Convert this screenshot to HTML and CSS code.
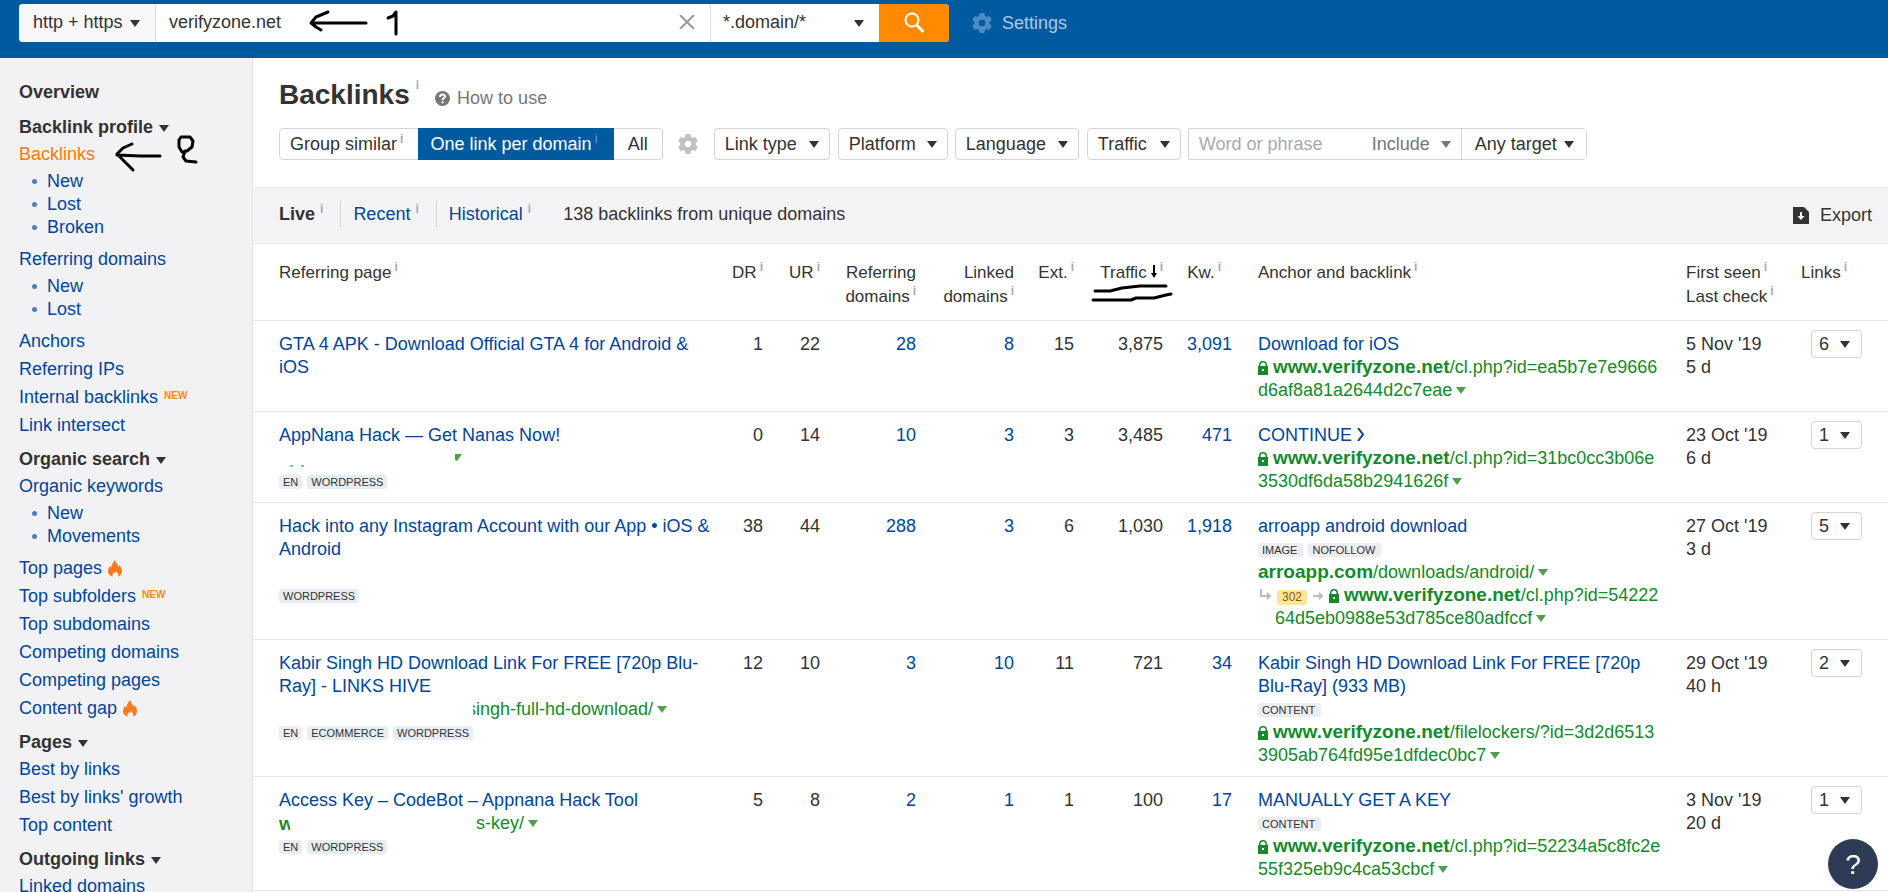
FILE: index.html
```html
<!DOCTYPE html>
<html lang="en">
<head>
<meta charset="utf-8">
<title>Backlinks: verifyzone.net</title>
<link rel="stylesheet" href="styles.css">
</head>
<body>
<svg class="defs" aria-hidden="true">
  <symbol id="gear" viewBox="0 0 24 24"><path fill="currentColor" fill-rule="evenodd" d="M9.2 0h5.6l.7 3.4 2.2 1.3L21 3.600l2.8 4.800-2.600 2.300v2.600l2.600 2.300-2.800 4.800-3.300-1.100-2.200 1.300-.7 3.400H9.200l-.7-3.400-2.200-1.300L3 20.400.2 15.600l2.600-2.300v-2.600L.2 8.400 3 3.600l3.300 1.100 2.200-1.300zM12 8a4 4 0 1 0 0 8 4 4 0 0 0 0-8z"/></symbol>
  <symbol id="lock" viewBox="0 0 10 14"><path fill="currentColor" fill-rule="evenodd" d="M0 5h1V4a4 4 0 0 1 8 0v1h1v9H0zM2.500 5h5V4a2.500 2.500 0 0 0-5 0zM4 8v2h2V8z"/></symbol>
  <symbol id="caret" viewBox="0 0 10 7"><path fill="currentColor" d="M0 0h10L5 7z"/></symbol>
  <symbol id="fire" viewBox="0 0 14 17"><path fill="#ff7a1f" d="M7 0c.6 2.600 3 4.200 3.400 7 .5-.5.8-1.300.8-2C13 6.700 14 9 14 11.300c0 2.500-1.300 4.400-3.600 5.500.3-2.300-.6-4-2.400-5.500-.2 1-.6 1.600-1.300 2-.3-.5-.5-1-.5-1.600-1.300 1.400-2 3-1.600 5.100C1.600 15.900 0 13.800 0 11.300 0 9 1.100 7.200 2.500 5.500c0 1 .2 1.800.8 2.500C3.500 5 5 2.200 7 0z"/></symbol>
</svg>

<header class="topbar">
  <form class="search">
    <select class="select search-protocol" aria-label="Protocol"><option>http + https</option></select>
    <div class="search-field">
      <input class="search-input" type="text" value="verifyzone.net" aria-label="Domain or URL">
      <button class="clear" type="button" aria-label="Clear"><svg width="16" height="14" viewBox="0 0 16 14"><path d="M1 0l14 14M15 0L1 14" stroke="#999" stroke-width="2"/></svg></button>
    </div>
    <select class="select search-mode" aria-label="Mode"><option>*.domain/*</option></select>
    <button class="search-go" type="button" aria-label="Search"><svg width="22" height="22" viewBox="0 0 22 22" fill="none" stroke="#fff" stroke-width="2"><circle cx="9" cy="8" r="6.500"/><path d="M13.500 13l7 7" stroke-width="3"/></svg></button>
  </form>
  <a class="settings" href="#"><svg width="20" height="20"><use href="#gear"/></svg>Settings</a>
</header>

<div class="layout">
  <nav class="sidebar">
    <h2 class="side-title">Overview</h2>
    <h2 class="side-title side-title-first">Backlink profile <svg class="side-caret"><use href="#caret"/></svg></h2>
    <ul class="side-list">
      <li><a class="active" href="#">Backlinks</a>
        <ul class="side-sub"><li><a href="#">New</a></li><li><a href="#">Lost</a></li><li><a href="#">Broken</a></li></ul></li>
      <li><a href="#">Referring domains</a>
        <ul class="side-sub"><li><a href="#">New</a></li><li><a href="#">Lost</a></li></ul></li>
      <li><a href="#">Anchors</a></li>
      <li><a href="#">Referring IPs</a></li>
      <li><a href="#">Internal backlinks</a><span class="new">NEW</span></li>
      <li><a href="#">Link intersect</a></li>
    </ul>
    <h2 class="side-title">Organic search <svg class="side-caret"><use href="#caret"/></svg></h2>
    <ul class="side-list">
      <li><a href="#">Organic keywords</a>
        <ul class="side-sub"><li><a href="#">New</a></li><li><a href="#">Movements</a></li></ul></li>
      <li><a href="#">Top pages</a><svg class="fire"><use href="#fire"/></svg></li>
      <li><a href="#">Top subfolders</a><span class="new">NEW</span></li>
      <li><a href="#">Top subdomains</a></li>
      <li><a href="#">Competing domains</a></li>
      <li><a href="#">Competing pages</a></li>
      <li><a href="#">Content gap</a><svg class="fire"><use href="#fire"/></svg></li>
    </ul>
    <h2 class="side-title">Pages <svg class="side-caret"><use href="#caret"/></svg></h2>
    <ul class="side-list">
      <li><a href="#">Best by links</a></li>
      <li><a href="#">Best by links' growth</a></li>
      <li><a href="#">Top content</a></li>
    </ul>
    <h2 class="side-title">Outgoing links <svg class="side-caret"><use href="#caret"/></svg></h2>
    <ul class="side-list">
      <li><a href="#">Linked domains</a></li>
    </ul>
  </nav>

  <main class="main">
    <div class="heading">
      <h1>Backlinks</h1><sup class="info">i</sup>
      <a class="howto" href="#"><svg width="15" height="15" viewBox="0 0 15 15"><circle cx="7.500" cy="7.500" r="7.500" fill="#777"/><path d="M5 6c0-3.200 5-3.200 5-.5 0 1.700-2.400 1.600-2.400 3.500M7.600 10.300v2" fill="none" stroke="#fff" stroke-width="2"/></svg>How to use</a>
    </div>

    <div class="filters">
      <div class="group">
        <button type="button">Group similar<sup class="info">i</sup></button>
        <button type="button" class="on">One link per domain<sup class="info">i</sup></button>
        <button type="button">All</button>
      </div>
      <button class="gear" type="button" aria-label="Filter settings"><svg width="20" height="20"><use href="#gear"/></svg></button>
      <select class="select filter f-type" aria-label="Link type"><option>Link type</option></select>
      <select class="select filter f-platform" aria-label="Platform"><option>Platform</option></select>
      <select class="select filter f-language" aria-label="Language"><option>Language</option></select>
      <select class="select filter f-traffic" aria-label="Traffic"><option>Traffic</option></select>
      <div class="phrase">
        <input type="text" placeholder="Word or phrase" aria-label="Word or phrase">
        <select class="select phrase-mode" aria-label="Include or exclude"><option>Include</option></select>
        <select class="select phrase-target" aria-label="Target"><option>Any target</option></select>
      </div>
    </div>

    <div class="tabs">
      <span class="tab"><b>Live</b><sup class="info">i</sup></span>
      <span class="tab"><a href="#">Recent</a><sup class="info">i</sup></span>
      <span class="tab"><a href="#">Historical</a><sup class="info">i</sup></span>
      <span class="count">138 backlinks from unique domains</span>
      <button class="export" type="button"><svg width="16" height="17" viewBox="0 0 16 17"><path d="M0 0h11l5 5v12H0z" fill="#333"/><path d="M7 5h2v4h2.500L8 13 4.500 9H7z" fill="#fff"/></svg>Export</button>
    </div>

    <table class="links">
      <colgroup><col class="c-page"><col class="c-dr"><col class="c-ur"><col class="c-rd"><col class="c-ld"><col class="c-ext"><col class="c-traffic"><col class="c-kw"><col><col class="c-seen"><col class="c-links"></colgroup>
      <thead>
        <tr>
          <th class="page">Referring page<sup class="info">i</sup></th>
          <th class="num">DR<sup class="info">i</sup></th>
          <th class="num">UR<sup class="info">i</sup></th>
          <th class="num">Referring<br>domains<sup class="info">i</sup></th>
          <th class="num">Linked<br>domains<sup class="info">i</sup></th>
          <th class="num">Ext.<sup class="info">i</sup></th>
          <th class="num marked">Traffic<svg class="sort" viewBox="0 0 6 13"><path d="M2 0h2v8h2l-3 5-3-5h2z"/></svg><sup class="info">i</sup>
            <svg class="pen underline" viewBox="0 0 82 18"><path d="M4 7l15 0 12-3 18-2 26 0M2 16l38 0 5-2 18 0 12-3 5-1"/></svg></th>
          <th class="num kw">Kw.<sup class="info">i</sup></th>
          <th class="anchor">Anchor and backlink<sup class="info">i</sup></th>
          <th>First seen<sup class="info">i</sup><br>Last check<sup class="info">i</sup></th>
          <th>Links<sup class="info">i</sup></th>
        </tr>
      </thead>
      <tbody>
        <tr>
          <td class="page"><a href="#">GTA 4 APK - Download Official GTA 4 for Android &amp; iOS</a></td>
          <td class="num">1</td><td class="num">22</td><td class="num"><a href="#">28</a></td><td class="num"><a href="#">8</a></td><td class="num">15</td><td class="num">3,875</td><td class="num"><a href="#">3,091</a></td>
          <td class="anchor"><a href="#">Download for iOS</a>
            <div class="url"><svg class="lock"><use href="#lock"/></svg><b>www.verifyzone.net</b>/cl.php?id=ea5b7e7e9666<wbr>d6af8a81a2644d2c7eae<svg class="more"><use href="#caret"/></svg></div></td>
          <td>5 Nov '19<br>5 d</td>
          <td class="pick"><select class="select" aria-label="Links"><option>6</option></select></td>
        </tr>
        <tr>
          <td class="page"><a href="#">AppNana Hack — Get Nanas Now!</a>
            <div class="url"><svg class="erased" viewBox="0 0 190 23"><path d="M176 7h7l-5 7-2-1z" fill="#4f9f4f"/><path d="M11 19h3M22 19h3" stroke="#148a2b"/></svg></div>
            <div class="tags"><span class="tag">EN</span><span class="tag cms">WORDPRESS</span></div></td>
          <td class="num">0</td><td class="num">14</td><td class="num"><a href="#">10</a></td><td class="num"><a href="#">3</a></td><td class="num">3</td><td class="num">3,485</td><td class="num"><a href="#">471</a></td>
          <td class="anchor"><a href="#">CONTINUE <svg class="chevron" viewBox="0 0 8 13"><path d="M1 0l5 6.500L1 13"/></svg></a>
            <div class="url"><svg class="lock"><use href="#lock"/></svg><b>www.verifyzone.net</b>/cl.php?id=31bc0cc3b06e<wbr>3530df6da58b2941626f<svg class="more"><use href="#caret"/></svg></div></td>
          <td>23 Oct '19<br>6 d</td>
          <td class="pick"><select class="select" aria-label="Links"><option>1</option></select></td>
        </tr>
        <tr>
          <td class="page"><a href="#">Hack into any Instagram Account with our App • iOS &amp; Android</a>
            <div class="url blank"></div>
            <div class="tags"><span class="tag cms">WORDPRESS</span></div></td>
          <td class="num">38</td><td class="num">44</td><td class="num"><a href="#">288</a></td><td class="num"><a href="#">3</a></td><td class="num">6</td><td class="num">1,030</td><td class="num"><a href="#">1,918</a></td>
          <td class="anchor"><a href="#">arroapp android download</a>
            <div class="tags"><span class="tag">IMAGE</span><span class="tag">NOFOLLOW</span></div>
            <div class="url"><b>arroapp.com</b>/downloads/android/<svg class="more"><use href="#caret"/></svg></div>
            <div class="url redirect"><svg class="hop" viewBox="0 0 12 12"><path d="M1 0v7h9M7 4l3 3-3 3"/></svg><span class="code">302</span><svg class="hop hop-next" viewBox="0 0 12 12"><path d="M0 7h9M6 4l3 3-3 3"/></svg><svg class="lock"><use href="#lock"/></svg><b>www.verifyzone.net</b>/cl.php?id=54222<wbr>64d5eb0988e53d785ce80adfccf<svg class="more"><use href="#caret"/></svg></div></td>
          <td>27 Oct '19<br>3 d</td>
          <td class="pick"><select class="select" aria-label="Links"><option>5</option></select></td>
        </tr>
        <tr>
          <td class="page"><a href="#">Kabir Singh HD Download Link For FREE [720p Blu-Ray] - LINKS HIVE</a>
            <div class="url partial"><span class="cut">singh-full-hd-download/</span><svg class="more"><use href="#caret"/></svg></div>
            <div class="tags"><span class="tag">EN</span><span class="tag cms">ECOMMERCE</span><span class="tag cms">WORDPRESS</span></div></td>
          <td class="num">12</td><td class="num">10</td><td class="num"><a href="#">3</a></td><td class="num"><a href="#">10</a></td><td class="num">11</td><td class="num">721</td><td class="num"><a href="#">34</a></td>
          <td class="anchor"><a href="#">Kabir Singh HD Download Link For FREE [720p Blu-Ray] (933 MB)</a>
            <div class="tags"><span class="tag">CONTENT</span></div>
            <div class="url"><svg class="lock"><use href="#lock"/></svg><b>www.verifyzone.net</b>/filelockers/?id=3d2d6513<wbr>3905ab764fd95e1dfdec0bc7<svg class="more"><use href="#caret"/></svg></div></td>
          <td>29 Oct '19<br>40 h</td>
          <td class="pick"><select class="select" aria-label="Links"><option>2</option></select></td>
        </tr>
        <tr>
          <td class="page"><a href="#">Access Key – CodeBot – Appnana Hack Tool</a>
            <div class="url split"><b class="stub">w</b><span>s-key/<svg class="more"><use href="#caret"/></svg></span></div>
            <div class="tags"><span class="tag">EN</span><span class="tag cms">WORDPRESS</span></div></td>
          <td class="num">5</td><td class="num">8</td><td class="num"><a href="#">2</a></td><td class="num"><a href="#">1</a></td><td class="num">1</td><td class="num">100</td><td class="num"><a href="#">17</a></td>
          <td class="anchor"><a href="#">MANUALLY GET A KEY</a>
            <div class="tags"><span class="tag">CONTENT</span></div>
            <div class="url"><svg class="lock"><use href="#lock"/></svg><b>www.verifyzone.net</b>/cl.php?id=52234a5c8fc2e<wbr>55f325eb9c4ca53cbcf<svg class="more"><use href="#caret"/></svg></div></td>
          <td>3 Nov '19<br>20 d</td>
          <td class="pick"><select class="select" aria-label="Links"><option>1</option></select></td>
        </tr>
      </tbody>
    </table>
  </main>
</div>

<svg class="pen step-one" viewBox="0 0 96 30" role="img" aria-label="1"><path d="M58 14H4M20 3L8 8l-5 6 5 4 5 3M80 9l5-2 3-4v22"/></svg>
<svg class="pen step-two" viewBox="0 0 90 40" role="img" aria-label="2"><path d="M49 22l-20 0-23-1M21 10L12 14l-6 6 8 8 8 8M68 12V6l2-3h9l3 4-1 6-5 4-5 1-3-5M74 17l-2 6 3 4 10 1"/></svg>
<button class="help" type="button" aria-label="Help">?</button>
</body>
</html>
```
FILE: styles.css
```css
* { box-sizing: border-box; }

body {
  margin: 0;
  height: 100vh;
  overflow: hidden;
  display: flex;
  flex-direction: column;
  position: relative;
  background: #fff;
  color: #333;
  font: 18px/23px "Liberation Sans", Arial, sans-serif;
}

a { color: #00459c; text-decoration: none; }
h1, h2, ul { margin: 0; padding: 0; }
ul { list-style: none; }
button, input, select { font: inherit; color: inherit; margin: 0; padding: 0; border: 0; background: none; }
button { cursor: pointer; }
.defs { position: absolute; width: 0; height: 0; }

.select {
  appearance: none;
  background: #fff url("data:image/svg+xml,%3Csvg xmlns='http://www.w3.org/2000/svg' width='10' height='7'%3E%3Cpath d='M0 0h10L5 7z' fill='%23333'/%3E%3C/svg%3E") no-repeat right 10px center;
}

.info {
  margin-left: 4px;
  color: #aaa;
  font-size: 12px;
  font-weight: bold;
  line-height: 1;
  vertical-align: 7px;
}

/* Top bar */
.topbar {
  flex: none;
  display: flex;
  align-items: flex-start;
  gap: 23px;
  height: 58px;
  padding: 4px 19px;
  background: #005a9f;
}
.search {
  flex: 0 1 930px;
  display: flex;
  height: 38px;
  border-radius: 4px;
  overflow: hidden;
  background: #fff;
}
.search-protocol {
  width: 137px;
  padding: 0 14px 1px;
  border-right: 1px solid #ddd;
  background-color: #f7f7fa;
  background-position: right 15px top 16px;
}
.search-field { flex: 1; display: flex; align-items: center; min-width: 0; padding: 0 15px 0 13px; }
.search-input { flex: 1; min-width: 0; height: 38px; padding-bottom: 1px; outline: 0; }
.clear { display: flex; padding-bottom: 2px; }
.search-mode {
  width: 169px;
  padding: 0 12px 1px;
  border-left: 1px solid #ddd;
  background-position: right 15px top 16px;
}
.search-go { width: 70px; display: grid; place-items: center; background: #ff8a00; }
.settings { display: flex; align-items: center; gap: 10px; height: 38px; color: #a9cae5; }
.settings svg { color: #4a8cc4; }

.layout { flex: 1; display: flex; min-height: 0; }

/* Sidebar */
.sidebar {
  flex: none;
  width: 253px;
  padding: 21px 19px 0;
  border-right: 1px solid #e2e2e6;
  background: #f2f2f4;
  overflow: hidden;
}
.side-title { margin-top: 7px; font-size: 18px; line-height: 26px; }
.side-title:first-child { margin-top: 0; }
.side-title-first { margin-top: 9px; }
.side-caret { width: 10px; height: 7px; margin-left: 1px; vertical-align: 1px; }
.side-list > li { line-height: 28px; }
.side-sub { padding: 2px 0 6px 28px; }
.side-sub li { display: flex; align-items: center; line-height: 23px; }
.side-sub li::before { content: ""; width: 5px; height: 5px; margin: 0 10px 0 -15px; border-radius: 50%; background: #4a7fc0; }
.active { color: #ff7a00; }
.new { margin-left: 6px; color: #ff8a00; font-size: 10px; font-weight: bold; line-height: 1; vertical-align: 4px; }
.fire { width: 14px; height: 17px; margin-left: 6px; vertical-align: -3px; }

/* Heading and filters */
.main { flex: 1; min-width: 0; padding-top: 21px; }
.heading { display: flex; padding: 0 26px; margin-bottom: 17px; }
.heading h1 { font-size: 28px; line-height: 32px; }
.heading .info { margin-left: 6px; }
.howto { display: flex; align-items: center; gap: 7px; margin-left: 16px; padding-top: 6px; color: #777; }

.filters { display: flex; align-items: center; height: 32px; margin: 0 26px 27px; }
.group { display: flex; height: 32px; margin-right: 15px; border: 1px solid #d4d4d4; border-radius: 4px; }
.group button { padding: 0 15px 0 10px; white-space: nowrap; }
.group button:last-child { padding: 0 14px; }
.group .info { margin-left: 3px; }
.group .on { margin: -1px 0; padding: 0 16px 0 12px; background: #005a9f; color: #fff; }
.group .on .info { color: #4a8cc4; }
.gear { display: flex; margin-right: 16px; color: #c0c0c0; }
.filter { height: 32px; margin-right: 8px; padding: 0 10px; border: 1px solid #d4d4d4; border-radius: 4px; }
.f-type { width: 116px; }
.f-platform { width: 110px; margin-right: 7px; }
.f-language { width: 124px; }
.f-traffic { width: 94px; margin-right: 7px; }
.phrase { display: flex; flex: 0 1 399px; height: 32px; border: 1px solid #d4d4d4; border-radius: 0 4px 4px 0; overflow: hidden; }
.phrase input { flex: 1; min-width: 0; padding: 0 10px; outline: 0; }
.phrase input::placeholder { color: #aaa; opacity: 1; }
.phrase-mode {
  width: 89px;
  color: #777;
  background-image: url("data:image/svg+xml,%3Csvg xmlns='http://www.w3.org/2000/svg' width='10' height='7'%3E%3Cpath d='M0 0h10L5 7z' fill='%23777'/%3E%3C/svg%3E");
}
.phrase-target { width: 125px; padding-left: 13px; border-left: 1px solid #d4d4d4; background-position: right 12px center; }

/* Tabs */
.tabs {
  display: flex;
  align-items: center;
  height: 57px;
  padding: 0 16px 3px 26px;
  border: solid #ebebeb;
  border-width: 1px 0;
  background: #f4f4f7;
}
.tab { height: 26px; line-height: 26px; padding-right: 17px; margin-right: 12px; border-right: 1px solid #d4d4d4; }
.tab .info { margin-left: 5px; }
.tab:nth-child(3) { border: 0; padding-right: 20px; }
.export { display: flex; align-items: center; gap: 11px; margin-left: auto; padding-top: 2px; }

/* Table */
.links { width: 100%; table-layout: fixed; border-collapse: separate; border-spacing: 0; }
.c-page { width: 465px; }
.c-dr { width: 45px; }
.c-ur { width: 57px; }
.c-rd { width: 96px; }
.c-ld { width: 98px; }
.c-ext { width: 60px; }
.c-traffic { width: 89px; }
.c-kw { width: 69px; }
.c-seen { width: 115px; }
.c-links { width: 87px; }
.links th {
  padding: 17px 0 11px;
  border-bottom: 1px solid #e6e6e6;
  font-size: 17px;
  font-weight: normal;
  line-height: 24px;
  text-align: left;
  vertical-align: top;
  white-space: nowrap;
}
.links th .info { margin-left: 3px; }
.links td { padding: 12px 0 9px; border-bottom: 1px solid #e6e6e6; vertical-align: top; }
.links .num { text-align: right; }
.links .kw { padding-right: 11px; }
.links .page { padding-left: 26px; }
.links .anchor { padding-left: 26px; padding-right: 14px; }
.links .marked { position: relative; }
.sort { width: 6px; height: 13px; margin-left: 4px; }

.url { color: #148a2b; min-height: 23px; }
.url b { font-size: 19px; line-height: 1; }
.lock { width: 10px; height: 14px; margin-right: 5px; vertical-align: -2px; }
.more { width: 10px; height: 7px; margin-left: 4px; vertical-align: 2px; color: #4f9f4f; }
.erased { display: block; width: 190px; height: 23px; }
.redirect { padding-left: 17px; text-indent: -15px; white-space: nowrap; }
.code {
  display: inline-block;
  margin: 0 6px 0 5px;
  padding: 0 5px;
  border-radius: 3px;
  background: #ffe49c;
  color: #8a5a00;
  font-size: 12px;
  line-height: 15px;
  text-indent: 0;
}
.hop { width: 12px; height: 12px; fill: none; stroke: #bbb; stroke-width: 2; }
.hop-next { margin-right: 4px; }
.chevron { width: 8px; height: 13px; fill: none; stroke: #00459c; stroke-width: 2; }
.partial { display: flex; padding-left: 194px; }
.partial .more { margin-top: 8px; }
.cut { overflow: hidden; text-indent: -6px; }
.split { display: flex; }
.stub { width: 11px; margin-right: 186px; overflow: hidden; }
.url .stub { line-height: 23px; }

.tags { display: flex; align-items: center; gap: 5px; height: 23px; }
.tag { padding: 0 6px 0 4px; border-radius: 3px; background: #ececf1; font-size: 11px; line-height: 14px; }
.page .tag { padding: 0 4px; }
.cms { background: #e6edf4; }

.links .pick { padding: 9px 0 0 10px; }
.pick .select { display: block; width: 51px; height: 28px; padding-left: 7px; border: 1px solid #d4d4d4; border-radius: 4px; background-position: right 11px center; }

/* Pen marks drawn over the page */
.pen { position: absolute; fill: none; stroke: #000; stroke-width: 3; stroke-linecap: round; stroke-linejoin: round; }
.step-one { left: 308px; top: 9px; width: 96px; height: 30px; }
.step-two { left: 111px; top: 134px; width: 90px; height: 40px; }
.underline { right: -10px; top: 40px; width: 82px; height: 18px; }

.help {
  position: fixed;
  right: 10px;
  bottom: 3px;
  width: 50px;
  height: 50px;
  border-radius: 50%;
  background: #2d3b55;
  color: #fff;
  font-size: 28px;
}
```
